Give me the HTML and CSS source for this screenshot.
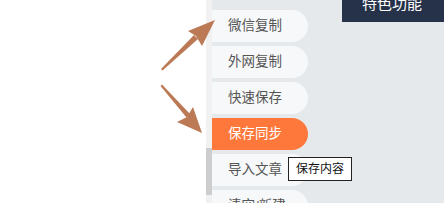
FILE: index.html
```html
<!DOCTYPE html>
<html lang="en">
<head>
    <meta charset="UTF-8">
    <meta name="viewport" content="width=device-width, initial-scale=1.0">
    <title>特色功能</title>
    <link rel="stylesheet" href="styles.css">
</head>
<body>
    <div class="page">
        <div class="blank"></div>

        <div class="scroll-track">
            <div class="scroll-thumb"></div>
        </div>

        <div class="main">
            <ul class="menu">
                <li class="menu-item">微信复制</li>
                <li class="menu-item">外网复制</li>
                <li class="menu-item">快速保存</li>
                <li class="menu-item active">保存同步</li>
                <li class="menu-item">导入文章 <span class="tooltip">保存内容</span></li>
                <li class="menu-item">清空/新建</li>
            </ul>
            <div class="content">
                <div class="feature-title">特色功能</div>
            </div>
        </div>

        <!-- pointer arrows drawn over the page -->
        <svg class="arrows" width="444" height="203" viewBox="0 0 444 203">
            <polygon points="161,69 162.5,70.5 198,39 194,35" fill="#bb7a55"/>
            <polygon points="215,20 188,31 196,36 202,46" fill="#bb7a55"/>
            <polygon points="160.5,86 162,84.5 190,114 186.5,117.5" fill="#bb7a55"/>
            <polygon points="202,133 177,122 187,117 193,107" fill="#bb7a55"/>
        </svg>
    </div>
</body>
</html>
```

FILE: styles.css
```css
body {
    margin: 0;
    padding: 0;
    font-family: "Liberation Sans", "Noto Sans CJK SC", sans-serif;
    background: #ffffff;
    overflow: hidden;
}

.page {
    display: flex;
    height: 203px;
    position: relative;
}

.blank {
    width: 206px;
    flex: 0 0 auto;
    background: #ffffff;
}

.scroll-track {
    width: 6px;
    flex: 0 0 auto;
    background: #f1f1f1;
    padding-top: 148px;
}

.scroll-thumb {
    height: 47px;
    background: #cdcdcd;
}

.main {
    flex: 1;
    display: flex;
    background: #e6e9ec;
}

.menu {
    list-style: none;
    margin: 0;
    padding: 10px 0 0;
    width: 96px;
    display: flex;
    flex-direction: column;
    gap: 4px;
}

.menu-item {
    position: relative;
    height: 32px;
    line-height: 32px;
    padding-left: 16px;
    background: #f7f8fa;
    border-radius: 0 16px 16px 0;
    color: #555555;
    font-size: 13.5px;
    white-space: nowrap;
}

.menu-item.active {
    background: #ff783b;
    color: #ffffff;
}

.tooltip {
    position: absolute;
    left: 76px;
    top: 3px;
    height: 22px;
    line-height: 22px;
    padding: 0 7px;
    background: #ffffff;
    border: 1px solid #222222;
    color: #111111;
    font-size: 12px;
}

.content {
    flex: 1;
    display: flex;
    justify-content: flex-end;
    align-items: flex-start;
}

.feature-title {
    width: 102px;
    height: 22px;
    box-sizing: border-box;
    padding: 0 0 11px 20px;
    display: flex;
    align-items: flex-end;
    overflow: hidden;
    background: #253249;
    color: #ffffff;
    font-size: 15px;
    line-height: 15px;
}

.arrows {
    position: absolute;
    left: 0;
    top: 0;
    pointer-events: none;
}
```
